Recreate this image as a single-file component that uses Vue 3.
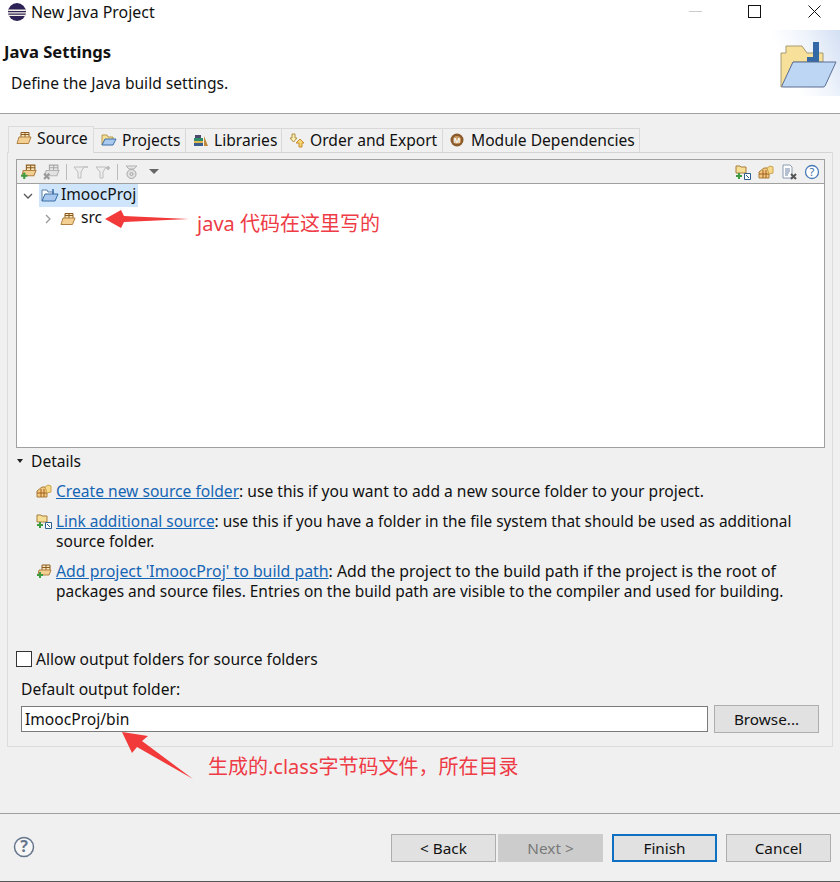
<template>
  <div class="dialog">
    <header class="head">
      <div class="titlebar">
        <svg class="logo" width="20" height="20" viewBox="0 0 20 20">
          <circle cx="10" cy="10" r="9" fill="#2c2255" />
          <path d="M1.2 7.600h17.600v1.300H1.200zM1 10.200h18v1.300H1zM1.600 12.800h16.800V14H1.600z" fill="#f6f1e8" />
        </svg>
        <span class="title">New Java Project</span>
        <div class="winbtns">
          <span class="min"></span>
          <span class="max"></span>
          <svg class="close" width="13" height="13" viewBox="0 0 13 13">
            <path d="M.5.5l12 12M12.500.5l-12 12" stroke="#111" stroke-width="1" fill="none" />
          </svg>
        </div>
      </div>
      <div class="banner">
        <div>
          <h1>Java Settings</h1>
          <p>Define the Java build settings.</p>
        </div>
        <div class="wizard">
          <svg width="70" height="66" viewBox="0 0 70 66">
            <path d="M11 57V23h5V16h16l5 7h16v9H23L12 57z" fill="#f6e09a" stroke="#a79a72" />
            <path d="M37 32v-5h6V12h6v20z" fill="#3569a6" />
            <path d="M23 32h43L55 56q-.5 1-2 1H13q-1.500 0-1-1.500z" fill="#bcd6f3" stroke="#5d6f94" />
          </svg>
        </div>
      </div>
    </header>

    <main class="body">
      <div class="tabs">
        <div v-for="(t, i) in tabs" :key="t.label" class="tab" :class="{ active: i === 0 }" :style="{ width: t.w + 'px' }">
          <svg v-if="t.icon === 'src'" class="ic" width="16" height="14" viewBox="0 0 16 14">
            <path d="M5 6V1.500h8V6" fill="#fbe8c0" stroke="#8a5a1e" />
            <path d="M9 1.500V6M5 3.500h8" stroke="#8a5a1e" />
            <path d="M1 12.500L3 6h12l-2.500 6.500z" fill="#f4cf92" stroke="#b08040" />
          </svg>
          <svg v-else-if="t.icon === 'proj'" class="ic" width="16" height="14" viewBox="0 0 16 14">
            <path d="M1 12V2h5l1 2h5v2" fill="#f5df96" stroke="#b59a4f" />
            <path d="M1 12l3-6h11l-3 6z" fill="#a9c9ee" stroke="#3a6ea5" />
          </svg>
          <svg v-else-if="t.icon === 'lib'" class="ic" width="16" height="14" viewBox="0 0 16 14">
            <path d="M1 5h9v3H1z" fill="#2e8b6e" />
            <path d="M1 8h9v2H1z" fill="#e1b94c" />
            <path d="M1 10h9v3H1z" fill="#3a5d8f" />
            <path d="M2 2h6v3H2z" fill="#49496b" />
            <path d="M11 3l4 10h-4z" fill="#c08a3e" />
          </svg>
          <svg v-else-if="t.icon === 'order'" class="ic" width="16" height="15" viewBox="0 0 16 15">
            <path d="M3 1h3v4h2L4.500 9 1 5h2z" fill="#fbeeb8" stroke="#b3903f" />
            <path d="M11 6l4 4h-2v4h-3v-4H7z" fill="#f7d774" stroke="#c98a2a" />
          </svg>
          <svg v-else class="ic" width="14" height="14" viewBox="0 0 14 14">
            <circle cx="7" cy="7" r="6.500" fill="#8a5a2b" />
            <circle cx="7" cy="7" r="4" fill="#c69a63" />
            <text x="7" y="9.500" class="mtxt" text-anchor="middle">M</text>
          </svg>
          <span>{{ t.label }}</span>
        </div>
      </div>

      <section class="panel">
        <div class="treebox">
          <div class="toolbar">
            <svg class="tb" width="17" height="17" viewBox="0 0 16 16">
              <path d="M6 7V2h8v5" fill="#fbe8c0" stroke="#8a5a1e" />
              <path d="M10 2v5M6 4.500h8" stroke="#8a5a1e" />
              <path d="M2 12l1-5h12l-2 5z" fill="#f4cf92" stroke="#b08040" />
              <path d="M4 9v6M1 12h6" stroke="#3f9b3f" stroke-width="2" />
            </svg>
            <svg class="tb dim" width="17" height="17" viewBox="0 0 16 16">
              <path d="M6 7V2h8v5" fill="#e8e8e8" stroke="#888" />
              <path d="M10 2v5M6 4.500h8" stroke="#888" />
              <path d="M2 12l1-5h12l-2 5z" fill="#ddd" stroke="#999" />
              <path d="M1 10l5 5M6 10l-5 5" stroke="#777" stroke-width="2" />
            </svg>
            <span class="sep"></span>
            <svg class="tb dim" width="16" height="16" viewBox="0 0 16 16">
              <path d="M1 3h10L8 8v6H5V8z" fill="#ececec" stroke="#aaa" />
              <path d="M10 3h5" stroke="#bbb" stroke-width="2" />
            </svg>
            <svg class="tb dim" width="16" height="16" viewBox="0 0 16 16">
              <path d="M1 3h10L8 8v6H5V8z" fill="#ececec" stroke="#aaa" />
              <path d="M11 4h4M13 2v4" stroke="#aaa" stroke-width="2" />
            </svg>
            <span class="sep"></span>
            <svg class="tb dim" width="16" height="16" viewBox="0 0 16 16">
              <path d="M2 2h11l-3 3H5z" fill="#ddd" stroke="#999" />
              <circle cx="7.500" cy="10" r="4.500" fill="#ddd" stroke="#888" />
              <circle cx="7.500" cy="10" r="1.500" fill="none" stroke="#888" />
            </svg>
            <span class="drop"></span>
            <div class="tbright">
              <svg class="tb" width="16" height="16" viewBox="0 0 16 16">
                <path d="M1 2h4l1 1h5v6H1z" fill="#f5df96" stroke="#a87c3c" />
                <path d="M4 9v6M1 12h6" stroke="#3f9b3f" stroke-width="2" />
                <path d="M9.500 9.500h6v6h-6z" fill="#fff" stroke="#2c5d8f" />
                <path d="M11 11l3 3" stroke="#2c5d8f" />
              </svg>
              <svg class="tb" width="16" height="16" viewBox="0 0 16 16">
                <path d="M1 8l5-4h3l2 4v6H1z" fill="#f3c982" stroke="#a87c3c" />
                <path d="M5 6v8M8 6v8M1 10h10" stroke="#a0601e" />
                <path d="M9 4l3-2 3 1v6l-4 1z" fill="#f6d98b" stroke="#c9a34d" />
              </svg>
              <svg class="tb" width="16" height="16" viewBox="0 0 16 16">
                <path d="M2 1h7l2 2v11H2z" fill="#fff" stroke="#8a9ab0" />
                <path d="M4 5h5M4 7h5M4 9h4M4 11h3" stroke="#6d83a3" />
                <path d="M10 10l5 5M15 10l-5 5" stroke="#555" stroke-width="2" />
              </svg>
              <svg class="tb" width="16" height="16" viewBox="0 0 16 16">
                <circle cx="8" cy="8" r="6.500" fill="#fff" stroke="#4a7ab5" stroke-width="1.300" />
                <text x="8" y="11.500" class="qtxt" text-anchor="middle">?</text>
              </svg>
            </div>
          </div>

          <div class="tree">
            <div class="row">
              <svg class="chev" width="10" height="10" viewBox="0 0 10 10">
                <path d="M1 3l4 4 4-4" fill="none" stroke="#555" stroke-width="1.300" />
              </svg>
              <div class="sel">
                <svg width="18" height="15" viewBox="0 0 18 15">
                  <path d="M1 13V2h5l1 2h5v2" fill="#fff" stroke="#5d7ea8" />
                  <path d="M1 13l3-7h13l-3 7z" fill="#a9c9ee" stroke="#3a6ea5" />
                  <path d="M12 1v5" stroke="#3a6ea5" stroke-width="1.500" />
                </svg>
                <span class="lift">ImoocProj</span>
              </div>
            </div>
            <div class="row child">
              <svg class="chev" width="8" height="10" viewBox="0 0 8 10">
                <path d="M2 1l4 4-4 4" fill="none" stroke="#999" stroke-width="1.300" />
              </svg>
              <svg class="srcic" width="16" height="14" viewBox="0 0 16 14">
                <path d="M5 6V1.500h8V6" fill="#fbe8c0" stroke="#8a5a1e" />
                <path d="M9 1.500V6M5 3.500h8" stroke="#8a5a1e" />
                <path d="M1 12.500L3 6h12l-2.500 6.500z" fill="#f4cf92" stroke="#b08040" />
              </svg>
              <span class="lift">src</span>
            </div>
          </div>
        </div>

        <div class="details">
          <div class="dhead"><span class="tri"></span>Details</div>
          <div class="item first">
            <svg class="ic2" width="16" height="16" viewBox="0 0 16 16">
              <path d="M1 8l5-4h3l2 4v6H1z" fill="#f3c982" stroke="#a87c3c" />
              <path d="M5 6v8M8 6v8M1 10h10" stroke="#a0601e" />
              <path d="M9 4l3-2 3 1v6l-4 1z" fill="#f6d98b" stroke="#c9a34d" />
            </svg>
            <p><a>Create new source folder</a>: use this if you want to add a new source folder to your project.</p>
          </div>
          <div class="item">
            <svg class="ic2" width="16" height="16" viewBox="0 0 16 16">
              <path d="M1 2h4l1 1h5v6H1z" fill="#f5df96" stroke="#a87c3c" />
              <path d="M4 9v6M1 12h6" stroke="#3f9b3f" stroke-width="2" />
              <path d="M9.500 9.500h6v6h-6z" fill="#fff" stroke="#2c5d8f" />
              <path d="M11 11l3 3" stroke="#2c5d8f" />
            </svg>
            <p><span class="narrow"><a>Link additional source</a>: use this if you have a folder in the file system that should be used as additional</span><br />source folder.</p>
          </div>
          <div class="item">
            <svg class="ic2" width="16" height="16" viewBox="0 0 16 16">
              <path d="M6 7V2h8v5" fill="#fbe8c0" stroke="#8a5a1e" />
              <path d="M10 2v5M6 4.500h8" stroke="#8a5a1e" />
              <path d="M2 12l1-5h12l-2 5z" fill="#f4cf92" stroke="#b08040" />
              <path d="M4 9v6M1 12h6" stroke="#3f9b3f" stroke-width="2" />
            </svg>
            <p><span class="wide"><a>Add project 'ImoocProj' to build path</a>: Add the project to the build path if the project is the root of</span><br /><span class="narrow2">packages and source files. Entries on the build path are visible to the compiler and used for building.</span></p>
          </div>
        </div>

        <label class="check"><span class="box"></span>Allow output folders for source folders</label>
        <div class="outlabel">Default output folder:</div>
        <div class="outrow">
          <div class="input">ImoocProj/bin</div>
          <button type="button" class="btn browse">Browse...</button>
        </div>
      </section>

      <div class="spacer"></div>

      <footer class="foot">
        <svg class="help" width="22" height="22" viewBox="0 0 22 22">
          <circle cx="11" cy="11" r="9.500" fill="#f6f6f6" stroke="#66768c" stroke-width="1.500" />
          <text x="11" y="16" class="htxt" text-anchor="middle">?</text>
        </svg>
        <div class="btns">
          <button type="button" class="btn">&lt; Back</button>
          <button type="button" class="btn next">Next &gt;</button>
          <button type="button" class="btn finish">Finish</button>
          <button type="button" class="btn cancel">Cancel</button>
        </div>
      </footer>
    </main>

    <!-- red notes drawn on top of the screenshot -->
    <svg class="arrow a1" width="84" height="20" viewBox="0 0 84 20">
      <path d="M0 10L16 1l3 6 65 3-65 3-3 6z" fill="#f23a3a" />
    </svg>
    <span class="note n1">java 代码在这里写的</span>
    <svg class="arrow a2" width="72" height="48" viewBox="0 0 72 48">
      <path d="M0 0l26 4-6 5 51 38L15 15l-5 6z" fill="#f23a3a" />
    </svg>
    <span class="note n2">生成的.class字节码文件，所在目录</span>
  </div>
</template>

<script setup>
const tabs = [
  { label: 'Source', icon: 'src', w: 86 },
  { label: 'Projects', icon: 'proj', w: 92 },
  { label: 'Libraries', icon: 'lib', w: 96 },
  { label: 'Order and Export', icon: 'order', w: 161 },
  { label: 'Module Dependencies', icon: 'mod', w: 197 },
]
</script>

<style>
html,
body {
  margin: 0;
  background: #f0f0f0;
}
</style>

<style scoped>
.dialog {
  position: relative;
  width: 840px;
  height: 882px;
  overflow: hidden;
  box-sizing: border-box;
  border-bottom: 1px solid #555;
  background: #f0f0f0;
  color: #111;
  font-family: "Noto Sans", "Noto Sans CJK SC", sans-serif;
  font-size: 15.600px;
}

.head {
  height: 114px;
  box-sizing: border-box;
  background: #fff;
  border-bottom: 1px solid #a0a0a0;
}

.titlebar {
  display: flex;
  align-items: center;
  height: 23px;
  padding-left: 7px;
}

.title {
  margin-left: 4px;
  font-size: 15.900px;
}

.winbtns {
  display: flex;
  align-items: center;
  margin-left: auto;
}

.min {
  width: 13px;
  height: 1px;
  background: #ccc;
  margin-right: 46px;
}

.max {
  width: 11px;
  height: 11px;
  border: 1px solid #111;
  margin-right: 47px;
}

.close {
  margin-right: 19px;
}

.banner {
  display: flex;
  justify-content: space-between;
}

.banner h1 {
  margin: 17px 0 0 4px;
  font-size: 16.600px;
  line-height: 24px;
  font-weight: 700;
}

.banner p {
  margin: 7px 0 0 11px;
  line-height: 24px;
}

.wizard {
  width: 70px;
  height: 66px;
  margin-top: 7px;
  background: linear-gradient(245deg, #d3dff3 0%, #eef3fb 35%, #fff 70%);
}

.body {
  display: flex;
  flex-direction: column;
  height: 767px;
}

.tabs {
  display: flex;
  height: 26px;
  margin: 12px 0 0 8px;
}

.tab {
  display: flex;
  align-items: center;
  gap: 5px;
  box-sizing: border-box;
  padding: 0 0 2px 7px;
  margin-top: 2px;
  height: 25px;
  border: 1px solid #d9d9d9;
  border-left: none;
  border-bottom: none;
  white-space: nowrap;
}

.tab:last-child {
  gap: 7px;
}

.tab.active {
  margin-top: 0;
  height: 27px;
  padding-left: 7px;
  padding-bottom: 5px;
  background: #f0f0f0;
  border: 1px solid #dcdcdc;
  border-bottom: none;
  position: relative;
  z-index: 1;
  font-size: 15.800px;
}

.ic {
  flex: none;
}

.mtxt {
  font-size: 7px;
  font-weight: 700;
  fill: #fff;
}

.panel {
  height: 595px;
  box-sizing: border-box;
  margin: 0 7px 0 7px;
  padding: 6px 7px 0 8px;
  border: 1px solid #dcdcdc;
  border-top-color: #d4d4d4;
}

.treebox {
  height: 289px;
  box-sizing: border-box;
  border: 1px solid #a0a0a0;
  background: #fff;
}

.toolbar {
  display: flex;
  align-items: center;
  gap: 6px;
  height: 24px;
  box-sizing: border-box;
  padding: 0 3px;
  background: #f0f0f0;
  border-bottom: 1px solid #a0a0a0;
}

.dim {
  opacity: 0.7;
}

.sep {
  width: 1px;
  height: 16px;
  background: #bbb;
}

.drop {
  width: 0;
  height: 0;
  margin-left: 3px;
  border: 5px solid transparent;
  border-top: 5px solid #666;
  border-bottom: none;
}

.tbright {
  display: flex;
  gap: 7px;
  margin-left: auto;
  padding-right: 1px;
}

.tree {
  padding: 0 0 0 6px;
}

.row {
  display: flex;
  align-items: center;
  height: 23px;
}

.row .chev {
  margin-right: 6px;
}

.sel {
  display: flex;
  align-items: center;
  gap: 2px;
  height: 23px;
  padding: 0 2px;
  background: #cfe5fb;
}

.lift {
  padding-bottom: 3px;
}

.row.child {
  padding-left: 21px;
}

.srcic {
  margin: 0 5px 0 2px;
}

.details {
  margin-top: 2px;
}

.dhead {
  display: flex;
  align-items: center;
  height: 22px;
  padding-left: 1px;
}

.tri {
  width: 0;
  height: 0;
  margin-right: 8px;
  border: 3.500px solid transparent;
  border-top: 4px solid #222;
  border-bottom: none;
}

.item {
  display: flex;
  align-items: flex-start;
  margin-left: 20px;
  margin-top: 10px;
}

.item.first {
  margin-top: 9px;
}

.ic2 {
  flex: none;
  margin: 2px 4px 0 0;
}

.item p {
  margin: 0;
  line-height: 20px;
  white-space: nowrap;
}

.narrow {
  font-size: 15.400px;
  line-height: 1;
}

.narrow2 {
  font-size: 15.450px;
  line-height: 1;
}

.wide {
  font-size: 15.850px;
  line-height: 1;
}

.item a {
  color: #1565b5;
  text-decoration: underline;
}

.check {
  display: flex;
  align-items: center;
  gap: 4px;
  margin-top: 48px;
  height: 20px;
}

.box {
  width: 14px;
  height: 14px;
  border: 1px solid #333;
  background: #fff;
}

.outlabel {
  margin: 10px 0 0 5px;
  line-height: 20px;
}

.outrow {
  display: flex;
  gap: 6px;
  margin: 7px 0 0 5px;
}

.input {
  width: 687px;
  height: 26px;
  box-sizing: border-box;
  border: 1px solid #7a7a7a;
  background: #fff;
  padding-left: 3px;
  line-height: 24px;
}

.btn {
  width: 105px;
  height: 28px;
  box-sizing: border-box;
  border: 1px solid #adadad;
  background: #e1e1e1;
  color: #111;
  font: inherit;
  font-size: 15.300px;
  padding: 0;
}

.browse {
  margin-top: -1px;
}

.spacer {
  height: 67px;
  border-bottom: 1px solid #a0a0a0;
  box-sizing: border-box;
}

.foot {
  display: flex;
  align-items: flex-start;
  padding: 20px 9px 0 13px;
}

.help {
  margin-top: 2px;
}

.htxt {
  font-size: 16px;
  font-weight: 700;
  fill: #66768c;
}

.qtxt {
  font-size: 11px;
  fill: #3a6ea5;
}

.btns {
  display: flex;
  margin-left: auto;
  gap: 2px;
}

.next {
  background: #cccccc;
  border-color: #cccccc;
  color: #787878;
}

.finish {
  margin-left: 7px;
  border: 2px solid #0f6fc0;
  background: #e1e1e1;
}

.cancel {
  margin-left: 7px;
}

.note {
  position: absolute;
  color: #ee3b46;
  font-size: 20px;
  line-height: 26px;
  white-space: nowrap;
}

.n1 {
  left: 197px;
  top: 211px;
}

.n2 {
  left: 208px;
  top: 754px;
}

.arrow {
  position: absolute;
}

.a1 {
  left: 105px;
  top: 209px;
}

.a2 {
  left: 122px;
  top: 732px;
}
</style>
